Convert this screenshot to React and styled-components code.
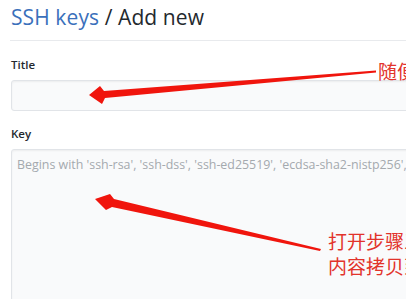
import React from 'react';
import styled, { createGlobalStyle } from 'styled-components';

const GlobalStyle = createGlobalStyle`
  html, body {
    margin: 0;
    padding: 0;
    background: #fff;
    overflow: hidden;
  }
  body {
    font-family: "Open Sans", "Noto Sans", "Liberation Sans", sans-serif;
    color: #24292e;
  }
`;

const Page = styled.div`
  position: relative;
  width: 406px;
  height: 299px;
  overflow: hidden;
`;

const Form = styled.div`
  width: 900px;
  padding-left: 11px;
`;

const Header = styled.h2`
  margin: 0 0 0 -1px;
  padding: 4px 0 9px 1px;
  font-size: 21px;
  font-weight: 400;
  line-height: 27px;
  letter-spacing: 0.1px;
  border-bottom: 1px solid #e8eaed;
`;

const Crumb = styled.span`
  color: #3a70bb;
`;

const Label = styled.label`
  display: block;
  font-size: 11.5px;
  font-weight: 600;
  line-height: 16px;
  margin: ${(p) => p.$top}px 0 ${(p) => p.$bottom}px;
`;

const Field = styled.input`
  display: block;
  box-sizing: border-box;
  width: 100%;
  height: 31px;
  margin: 0;
  background: #f9fafb;
  border: 1px solid #e1e4e8;
  border-radius: 3px;
  box-shadow: inset 0 1px 2px rgba(27, 31, 35, 0.06);
`;

const Area = styled.textarea`
  display: block;
  box-sizing: border-box;
  width: 100%;
  height: 200px;
  margin: 0;
  padding: 7px 5px;
  resize: none;
  background: #f9fafb;
  border: 1px solid #e1e4e8;
  border-radius: 3px;
  font-family: inherit;
  font-size: 12.4px;
  line-height: 16px;
  box-shadow: inset 0 1px 2px rgba(27, 31, 35, 0.06);

  &::placeholder {
    color: #a4a9ae;
  }
`;

const Note = styled.div`
  position: absolute;
  left: ${(p) => p.$x}px;
  top: ${(p) => p.$y}px;
  color: #e2332b;
  font-family: "Noto Sans CJK SC", sans-serif;
  font-size: 19px;
  line-height: 25px;
  white-space: nowrap;
`;

const Overlay = styled.svg`
  position: absolute;
  left: 0;
  top: 0;
  pointer-events: none;
`;

export default function App() {
  return (
    <Page>
      <GlobalStyle />
      <Form>
        <Header>
          <Crumb>SSH keys</Crumb> / Add new
        </Header>
        <Label $top={16} $bottom={7}>Title</Label>
        <Field type="text" />
        <Label $top={15} $bottom={7}>Key</Label>
        <Area placeholder="Begins with 'ssh-rsa', 'ssh-dss', 'ssh-ed25519', 'ecdsa-sha2-nistp256', 'ecdsa-sha2-nistp384', or 'ecdsa-sha2-nistp521'" />
      </Form>

      <Note $x={378} $y={58}>随便填写</Note>
      <Note $x={328} $y={228}>
        打开步骤三生成的文件
        <br />
        内容拷贝到这里
      </Note>

      <Overlay width="406" height="299" viewBox="0 0 406 299">
        <polygon
          fill="#f0150d"
          points="89,95 100,86 104,91 376,70.5 376,72.5 105,98 102,104"
        />
        <polygon
          fill="#f0150d"
          points="95,199 110,194 114,199 321,249 320,251 112,207 106,210"
        />
      </Overlay>
    </Page>
  );
}
